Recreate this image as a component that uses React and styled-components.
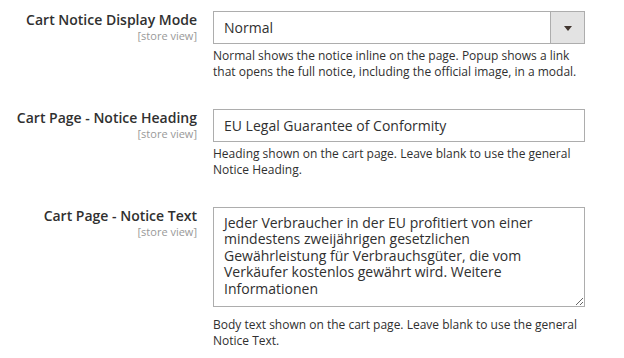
import React from "react";
import styled, { createGlobalStyle } from "styled-components";

const GlobalStyle = createGlobalStyle`
  html, body {
    margin: 0;
    padding: 0;
    background: #ffffff;
  }
  body {
    font-family: "Open Sans", "Liberation Sans", sans-serif;
    color: #303030;
  }
`;

const fields = [
  {
    label: "Cart Notice Display Mode",
    kind: "select",
    value: "Normal",
    note: "Normal shows the notice inline on the page. Popup shows a link that opens the full notice, including the official image, in a modal.",
  },
  {
    label: "Cart Page - Notice Heading",
    kind: "input",
    value: "EU Legal Guarantee of Conformity",
    note: "Heading shown on the cart page. Leave blank to use the general Notice Heading.",
  },
  {
    label: "Cart Page - Notice Text",
    kind: "textarea",
    value:
      "Jeder Verbraucher in der EU profitiert von einer mindestens zweijährigen gesetzlichen Gewährleistung für Verbrauchsgüter, die vom Verkäufer kostenlos gewährt wird. Weitere Informationen",
    note: "Body text shown on the cart page. Leave blank to use the general Notice Text.",
  },
];

export default function App() {
  return (
    <>
      <GlobalStyle />
      <Form>
        {fields.map((f) => (
          <Row key={f.label}>
            <LabelCell>
              <Label>{f.label}</Label>
              <Scope>[store view]</Scope>
            </LabelCell>
            <Control>
              {f.kind === "select" && (
                <Select>
                  <SelectValue>{f.value}</SelectValue>
                  <SelectButton>
                    <Arrow />
                  </SelectButton>
                </Select>
              )}
              {f.kind === "input" && <Input type="text" defaultValue={f.value} />}
              {f.kind === "textarea" && <TextArea defaultValue={f.value} />}
              <Note>{f.note}</Note>
            </Control>
          </Row>
        ))}
      </Form>
    </>
  );
}

const Form = styled.form`
  padding-top: 11px;
  display: flex;
  flex-direction: column;
  gap: 29px;
`;

const Row = styled.div`
  display: grid;
  grid-template-columns: 197px 372px;
  column-gap: 16px;
  align-items: start;
`;

const LabelCell = styled.div`
  display: flex;
  flex-direction: column;
  align-items: flex-end;
  text-align: right;
  padding-top: 1px;
`;

const Label = styled.span`
  font-size: 14px;
  font-weight: 600;
  line-height: 16px;
  color: #303030;
`;

const Scope = styled.span`
  font-size: 11px;
  line-height: 13px;
  color: #999999;
  margin-top: 1px;
`;

const Control = styled.div`
  display: flex;
  flex-direction: column;
`;

const Select = styled.div`
  box-sizing: border-box;
  height: 33px;
  border: 1px solid #adadad;
  display: flex;
  align-items: stretch;
  background: #ffffff;
`;

const SelectValue = styled.span`
  flex: 1;
  display: flex;
  align-items: center;
  padding-left: 10px;
  font-size: 14px;
  color: #303030;
`;

const SelectButton = styled.span`
  width: 33px;
  background: #e3e3e3;
  border-left: 1px solid #adadad;
  display: flex;
  align-items: center;
  justify-content: center;
`;

const Arrow = styled.span`
  width: 0;
  height: 0;
  border-left: 4px solid transparent;
  border-right: 4px solid transparent;
  border-top: 5px solid #41362f;
  margin-top: 1px;
`;

const Input = styled.input`
  box-sizing: border-box;
  height: 33px;
  width: 100%;
  border: 1px solid #adadad;
  border-radius: 0;
  padding: 0 10px;
  font-family: "Open Sans", "Liberation Sans", sans-serif;
  font-size: 14px;
  color: #303030;
  outline: none;
`;

const TextArea = styled.textarea`
  box-sizing: border-box;
  display: block;
  height: 100px;
  width: 100%;
  margin: 0 0 6px;
  border: 1px solid #adadad;
  border-radius: 0;
  padding: 7px 10px;
  font-family: "Open Sans", "Liberation Sans", sans-serif;
  font-size: 14px;
  line-height: 16.4px;
  color: #303030;
  outline: none;
  overflow: hidden;
`;

const Note = styled.div`
  margin-top: 4px;
  font-size: 12px;
  line-height: 16px;
  color: #303030;
`;
